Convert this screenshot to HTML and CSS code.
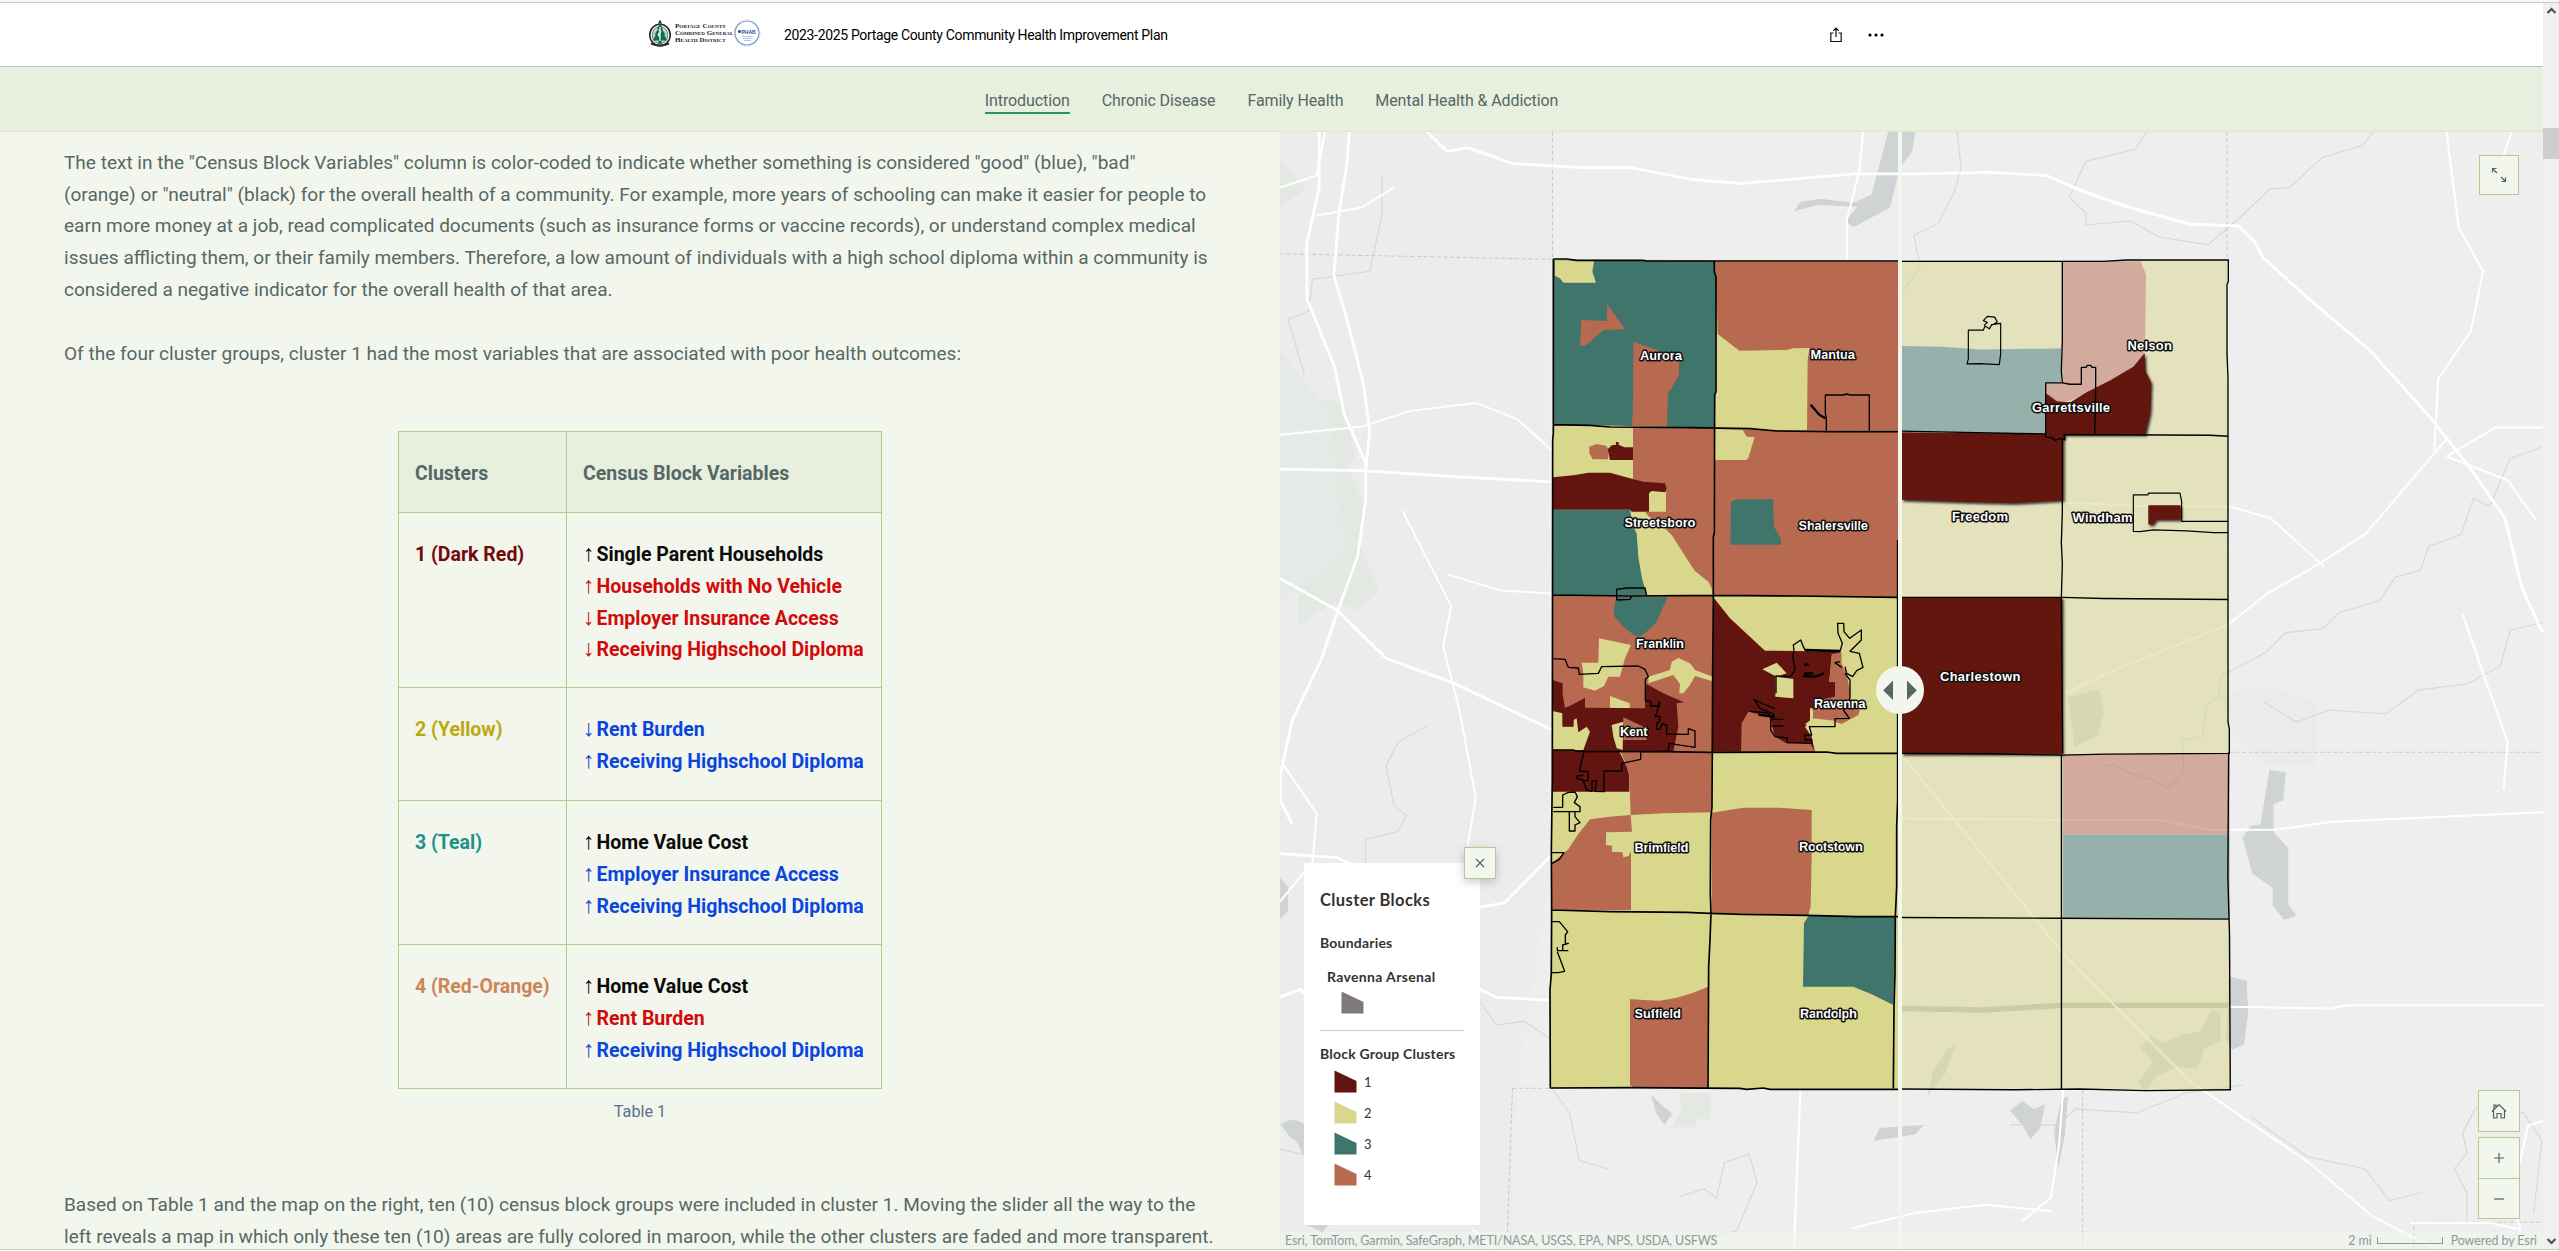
FILE: index.html
```html
<!DOCTYPE html>
<html lang="en">
<head>
<meta charset="utf-8">
<title>2023-2025 Portage County Community Health Improvement Plan</title>
<link rel="stylesheet" href="styles.css">
</head>
<body>
<div class="top-edge"></div>
<div class="window">
<div class="page">
  <header class="header">
    <div class="brand">
      <svg class="tree" width="24" height="28" viewBox="0 0 24 28"><path d="M12 .5l2 4h-4z" fill="#26302c"/><ellipse cx="12" cy="16" rx="10.2" ry="10.8" fill="#fff" stroke="#26302c" stroke-width="1.6"/><ellipse cx="12" cy="16" rx="7.8" ry="8.6" fill="#c5d3cb" stroke="#555" stroke-width=".7"/><path d="M12 5l3 5-1 .3 3.4 5-1.3.3 3.2 5.9H4.700l3.200-5.900-1.300-.3 3.400-5L9 10zM10.500 21h3v4h-3z" fill="#08704b"/><path d="M12 8v14M10.500 11q4 1.500 1 3t1 4" fill="none" stroke="#fff" stroke-width="1.200"/><path d="M3 24.500q9 4 18 0" fill="none" stroke="#26302c" stroke-width="2"/></svg>
      <div class="brand-text"><span>Portage County</span><span>Combined General</span><span>Health District</span></div>
      <svg class="seal" width="28" height="28" viewBox="0 0 28 28"><circle cx="14" cy="14" r="13.300" fill="none" stroke="#bcc5d8" stroke-width=".7" stroke-dasharray="1 1.500"/><circle cx="14" cy="14" r="12" fill="#fff" stroke="#7b97d0" stroke-width="1.200"/><circle cx="6.500" cy="12.500" r="1.600" fill="#29529b"/><text x="8.500" y="14.500" font-family="Liberation Sans" font-weight="700" font-size="5" fill="#29529b">PHAB</text><path d="M9 17.500h11M9.500 19.500h10M11 21.500h7" stroke="#9bb0d8" stroke-width=".8"/></svg>
    </div>
    <h1 class="title">2023-2025 Portage County Community Health Improvement Plan</h1>
    <div class="actions">
      <svg width="12" height="16" viewBox="0 0 12 16"><path d="M3.500 6H.8v8.500h10.400V6H8.500M6 10V1.200M3.300 3.800L6 1.100l2.700 2.700" fill="none" stroke="#111" stroke-width="1.200"/></svg>
      <svg width="16" height="4" viewBox="0 0 16 4"><circle cx="2" cy="2" r="1.600"/><circle cx="8" cy="2" r="1.600"/><circle cx="14" cy="2" r="1.600"/></svg>
    </div>
  </header>
  <nav class="nav">
    <a class="active">Introduction</a><a>Chronic Disease</a><a>Family Health</a><a>Mental Health &amp; Addiction</a>
  </nav>
  <main class="main">
    <article class="story">
      <p>The text in the "Census Block Variables" column is color-coded to indicate whether something is considered "good" (blue), "bad"<br>(orange) or "neutral" (black) for the overall health of a community. For example, more years of schooling can make it easier for people to<br>earn more money at a job, read complicated documents (such as insurance forms or vaccine records), or understand complex medical<br>issues afflicting them, or their family members. Therefore, a low amount of individuals with a high school diploma within a community is<br>considered a negative indicator for the overall health of that area.</p>
      <p>Of the four cluster groups, cluster 1 had the most variables that are associated with poor health outcomes:</p>
      <table class="clusters">
        <tr class="r81"><th>Clusters</th><th>Census Block Variables</th></tr>
        <tr class="r175"><td class="maroon">1 (Dark Red)</td><td><div class="neutral"><i>↑</i>Single Parent Households</div><div class="bad"><i>↑</i>Households with No Vehicle</div><div class="bad"><i>↓</i>Employer Insurance Access</div><div class="bad"><i>↓</i>Receiving Highschool Diploma</div></td></tr>
        <tr class="r113"><td class="yellow">2 (Yellow)</td><td><div class="good"><i>↓</i>Rent Burden</div><div class="good"><i>↑</i>Receiving Highschool Diploma</div></td></tr>
        <tr class="r144"><td class="teal">3 (Teal)</td><td><div class="neutral"><i>↑</i>Home Value Cost</div><div class="good"><i>↑</i>Employer Insurance Access</div><div class="good"><i>↑</i>Receiving Highschool Diploma</div></td></tr>
        <tr class="r144"><td class="orange">4 (Red-Orange)</td><td><div class="neutral"><i>↑</i>Home Value Cost</div><div class="bad"><i>↑</i>Rent Burden</div><div class="good"><i>↑</i>Receiving Highschool Diploma</div></td></tr>
      </table>
      <div class="caption">Table 1</div>
      <p>Based on Table 1 and the map on the right, ten (10) census block groups were included in cluster 1. Moving the slider all the way to the<br>left reveals a map in which only these ten (10) areas are fully colored in maroon, while the other clusters are faded and more transparent.</p>
    </article>
    <section class="map">
      <svg class="canvas" width="1263" height="1117" viewBox="1280 132 1263 1117">
        <defs>
          <filter id="sh" x="-10%" y="-10%" width="130%" height="130%"><feDropShadow dx="1.500" dy="2" stdDeviation="1.300" flood-color="#222" flood-opacity=".85"/></filter>
          <clipPath id="lc"><rect x="1280" y="132" width="618" height="1118"/></clipPath>
        </defs>
        <rect x="1280" y="132" width="1263" height="1118" fill="#eee"/>
        <!-- basemap -->
        <g transform="translate(1280 0) scale(.8157 .7978)">
          <path d="M0 160H330V1100L290 1370V1570H0z" fill="#ececec"/>
          <path d="M0 200l32 38-32 20zM32 503l30-3 20 10 10 65-10 10 25 55-10 45 25 55-25 25-30-10-45 28z" fill="#e3e8e3"/>
          <path d="M0 440l60 75 20 180-80 60z" fill="#e6eae6"/>
          <path d="M490 1370h38v33h-18v10h-30l12-22z" fill="#e3e8e3"/>
          <path d="M1150 870l60-10 60 20v80h-60l-40-40z" fill="#ebebeb"/>
          <g fill="#cfd3d4">
            <path d="M747 160h33l-5 30-15 20-12 50-45 25-10-8 15-18-50-2-28 8 8-12 25-4 40 5 22-10 8-30z"/>
            <path d="M1213 965l20 3-3 35-12 5v35l18 20v70l10 15-15 5-14-18v-22l-25-18-12-45 10-15 12-2zM1163 1224l22 5 2 40-5 40-15 7-7-15z"/>
            <path d="M895 1392l15-12 14 10 14-6-6 30-12 14-10-18zM958 1378l8-4-4 50-8 40-5-45zM735 1414l55-4-12 12-50 8zM0 1408l25 8 8 18-20-8zM455 1372l12 12 14 12-10 14-10-15z"/>
            <path d="M0 1100l10 12v30l-10 10zM1 1410q15-12 30 0l-2 40-8-18zM32 1535h28l-8 10z"/>
            <path d="M828 1310l-12 35-22 28 6-28 18-30zM1068 1298l14 9 24-10 22-4 15-28 10 5v35l-20 9-8 26-25-3-25 12-15 20-8-12 18-26-16-18zM966 874l38-10 6 28-8 30-28 14z" opacity=".8"/>
          </g>
          <g fill="none" stroke="#d5d8d8" stroke-width="1.400">
            <path d="M1340 165l-12 17-50 15-40 38-25 2-30 30-45 40-60-10-35-20-55 5v-15l-20-20 20-45 60-15 15-22M830 165l5 45-8 30-20 40-30 15 8 40-25 35-40 5M125 220v50l-15 70-70 10-5 40-25 10 20 70M1548 560l-40 15-25 60-20-10-15 45-40 15-10 30-30 8-20 30-50 15-20 20-45 5-25 25-55 30-2 25-15 10-5 40-25 5 2 40-20 20-18-10-30-10-20-10-18 6M1548 780l-40 10-12 45-40 22-60 8-40 30-70-5-40 15-40-25M180 910l-35 20-15 30 10 50 15 12-10 20-40 10v45M1180 1360l-70 10-60 25-75-5-20 20-60 0M1190 1400l70 50 70 15 30 40 40-10M0 1440l40 10 30-15M245 1255l20 30 35-5 35 25M330 1360l25 35 12 60 35 10M490 1500l30-10 15 12 10-45 30-10 10 35-25 60-30 10"/>
            <path d="M1455 1535v-40l-15-30 15-20-5-25 15-30 15-5 45 10 22 35-10 90"/>
          </g>
          <path d="M762 1264l100 2 98-6 203 0" fill="none" stroke="#bfc1ba" stroke-width="7"/>
          <g fill="none" stroke="#c7c9c9" stroke-width="1.300" stroke-dasharray="5 3"><path d="M334 165v160M1161 165v160M0 318l334 7M1163 943h385M984 1366v200M285 1364h47M285 1364l-7 204M1390 1566v-34h158"/></g>
          <g fill="none" stroke="#fff" stroke-width="2.500" stroke-linejoin="round">
            <path d="M180 165l25 25 25-5 55 20 85 5 60 0 75 15 60 5 140-12h80l85-2 70 4 40 18 55 20 80 23 60 2 20 20 10 20 60 55 70 60 75 85 50 65 42 62 20 85 22 50 35 50 80 90 70 70" stroke-width="3.500"/>
            <path d="M85 165l-3 40-10 65-6 75 16 55 20 80 8 60-5 48 0 40-10 70-25 70-20 60-35 75-15 70v30l15 30M48 165v70l-15 70v70l34 85 12 60 28 65" stroke-width="3.500"/>
            <path d="M0 588l100 2 125 8 108 6M0 1070l70 5 20 10 60 75M215 1142l60-10 58-60M0 1250l25-10 4 5M245 1240l20 10 68 4M0 725l70 40 60 60 80 30 124 60" stroke-width="3.500"/>
            <path d="M0 545l100-10 60-20 80-10 50 20 44 40M45 270l55-10 40-25M205 720l65 20 64 4M0 1130l40-50 5-60-40-60M150 640l60 120-10 50 20 80 20 110-10 60M55 165l-10 55-45 15M715 165l-5 50-15 60v50"/>
            <path d="M760 1026l260 2 60 0 60 12 80 0 70-10 258-12M1163 1262l125 2 20-4 240 0M765 950l195 245 155 160 150 105 75 65 85 45" stroke-width="2.500"/>
            <path d="M960 630l110 5 95 0 50 15 65 60M1163 690l0-5M962 870l60-30 140-57 50-40 60-35 60-40 100-120M1430 165l15 120 30 55-15 75-40 60-5 90M1510 165l-20 60"/>
            <path d="M1430 572l60-36 58 0M1430 572l75 30 35 50M1450 770l20 60 35 100-5 60M638 1366l-8 200M960 1366l-5 70-10 65-35 30M700 1540l80-20 85-10 80 8M235 1540l30 28M1520 1566v-30l-12-25 22-100 18-6M1385 1533h100l35 8"/>
          </g>
        </g>
        <!-- fully coloured layer, left of the swipe handle -->
        <g clip-path="url(#lc)"><g transform="translate(1530 240) scale(.33333)">
          <path d="M70 58L1120 62V2546H60L68 600z" fill="#d9d78c"/>
          <path fill="#40756c" d="M70 62H553L558 110 556 460 553 562H480L190 556H70z"/>
          <path fill="#d9d78c" d="M75 62L192 64 187 95 198 128H100L90 115 75 108z"/>
          <path fill="#b86a51" d="M154 240L230 243 232 193 285 268 222 270 195 292 165 318 150 316zM310 305L380 330 447 365V405L425 445 414 460 411 558H306L309 490zM553 65H1120V572H831L833 360 838 324 790 325 770 330 628 332 563 282 558 110z"/>
          <path fill="#b86a51" d="M309 560L553 565 548 1068 545 1045 535 1025 494 992 460 940 425 885 400 860 357 830 345 815H408V755L309 717zM178 620L200 612 228 617 235 628V658H188L178 640zM553 567L1120 575V1070L550 1068z"/>
          <path fill="#621510" d="M68 712L130 706 175 698H240L300 715 340 725 405 730 410 748 405 757 365 753 357 760V815H305L300 809H68zM233 628L245 616 258 614V606H266V614L283 622H309V660H240z"/>
          <path fill="#40756c" d="M68 810H300L310 860 320 880 325 950 335 1010 350 1066H68zM603 785L622 778H729L732 860 752 895 753 914H601z"/>
          <path fill="#d9d78c" d="M555 567L638 570 650 590 674 592 665 620 655 655 648 660H555z"/>
          <g transform="translate(0 1020)">
            <path fill="#b86a51" d="M68 48H548V515H68z"/>
            <path fill="#40756c" d="M258 50L413 52 395 90 380 125 350 155 325 172 305 160 280 140 252 108V90z"/>
            <path fill="#d9d78c" d="M207 175L303 195 285 235 270 290H235L222 318 195 332 160 322V280L155 248H205zM355 290L420 270 425 245 445 234 480 250 495 270 548 290 545 303 495 288 480 315 460 340H448L450 312 430 285 355 310zM240 348L299 370V385L240 383z"/>
            <path fill="#d9d78c" d="M68 390H300V515H68z"/>
            <path fill="#621510" d="M68 300L98 310V345L105 383 125 375 165 353V383L345 385V310L400 340 462 367 440 370 445 440 430 515H268L298 575V635H68V510H160L180 455 170 440 145 457 140 415 131 420V440H97V400L68 393z"/>
            <path fill="#d9d78c" d="M245 435L280 425 278 510 260 505 250 470z"/>
            <path fill="#b86a51" d="M280 412L350 445V480H280zM272 516L545 517V697L400 700 302 705 298 590 290 560zM302 705L306 755 228 757V795L246 797V815L278 817 280 832 296 828 303 815V990H65V850L115 808 145 762 180 718 240 710zM546 698L640 683H750L845 690V830L842 980 835 1005 546 998z"/>
            <path fill="#621510" d="M550 52L600 115 705 212 935 215 905 230 898 305H915V350L865 385 840 395 848 420 825 440 845 470 855 515H548z"/>
            <path fill="#b86a51" d="M655 395L720 410 735 470 770 490H840L855 515H633L635 430zM905 222L935 218V250L950 285 960 330V385L990 390 985 405 935 432 915 425H848L850 385H865V400L868 360 915 350V305H898z"/>
            <path fill="#d9d78c" d="M736 290L790 297V355L736 350zM697 268L740 248 770 280 740 290zM935 228L990 215 1000 260 965 290 940 255zM825 433L848 415 915 422V440H845zM840 385h8v40h-8z"/>
          </g>
          <g transform="translate(0 1740)"><path fill="#40756c" d="M835 288H1097L1090 555 1030 525 970 500H819L822 310z"/><path fill="#b86a51" d="M300 537L340 540 390 542 440 533 490 518 534 500 532 805 312 803 300 795z"/></g>
          <g fill="none" stroke="#000" stroke-width="5" stroke-linejoin="round">
            <path d="M70 57L110 57 140 61H340L350 63H1110M70 57V580L68 600 67 1620 64 1830 65 2010 64 2200 60 2250 61 2545M553 65V95L558 110V455L554 465 553 880 550 890V1068L548 1300 546 1700 542 1740 541 1960 543 2020 540 2100 536 2180 534 2545M70 554L180 556 240 561 480 563 660 566 740 573 895 575 1110 575M68 1065L300 1068 550 1066 800 1068 1104 1072M68 1530H130L140 1534 390 1535 545 1537 890 1536 920 1540H1104M65 2010L240 2015 470 2017 540 2020 640 2023 830 2026 980 2030H1104M61 2544L310 2543 630 2545 650 2548 700 2544 720 2548H1110M1103 900V1680L1100 1760V1940L1096 2030 1095 2200 1092 2300 1090 2545"/>
            <path stroke-width="4" d="M889 572V535L886 520V465H940L950 462 960 465H1018V572M260 1080V1048L290 1044H345L350 1066M260 1080L300 1078 305 1068"/>
            <path stroke-width="7" d="M842 494L868 524 886 535"/>
            <g transform="translate(0 1020)" stroke-width="4">
              <path d="M70 236L105 238 115 262 145 264 148 283 205 280 215 260 325 258 345 268 355 290 346 298V362L362 364V378H388V364L380 400 375 408 390 410 388 425 380 430V448H390L395 432 410 435V462L475 463V446L495 453V502L416 490V513L390 515H332V538L275 550V573H222V635L195 634 200 602 186 604V634L170 630 160 604 175 600V575L148 573 162 516M160 600L140 596V588L160 586M70 682H98V645L115 637 135 636 142 650 133 668 150 680 150 695H70M118 695V753H135V735L150 728 135 710V695M66 818H102L88 838 66 850"/>
              <path d="M792 212L790 195 812 180 820 200 826 212 930 214 937 190 924 160 923 130 941 130 942 155 959 175 994 150V180L960 214 988 220 999 262 980 272 968 290 950 280 945 260M930 245L915 248 935 262M945 280L960 300V350L958 370 940 390 958 415 915 416V440H838L845 465 825 465V480H845V490L772 488V474L735 470 722 450V415L732 402 690 385 672 358 700 372 735 386M660 394L710 398 720 405M738 340V288L782 290 795 270 788 230 792 212M725 418H760M725 438H760"/>
              <path stroke-width="7" d="M685 404L735 411M822 280H850M820 288L855 290 882 280M826 210L930 213M822 254H836"/>
            </g>
            <g transform="translate(0 1740)" stroke-width="4"><path d="M66 305L88 305 113 335 106 345V370H115L98 375V392H82V382M115 392H98M82 395L104 454 85 458H66"/></g>
          </g>
        </g></g>
        <!-- faded layer, right of the swipe handle -->
        <g opacity=".5">
          <path fill="#d9d78c" transform="translate(1280 0) scale(.8157 .7978)" d="M762 326H1162L1163 750 1166 1366 762 1364z"/>
          <g transform="translate(1870 240) scale(.33333 .34435)"><path fill="#b86a51" d="M577 62H812L828 100 825 320 822 330 790 370 720 410 650 445 580 475 545 462 527 445 524 413H577z"/><path fill="#40756c" d="M96 308L215 310 330 318 573 315V413H524L527 562 96 557z"/></g>
          <g transform="translate(1280 0) scale(.8157 .7978)"><path fill="#b86a51" d="M960 945H1164V1046H960z"/><path fill="#40756c" d="M960 1046H1164V1152H960z"/></g>
        </g>
        <g fill="#621510" filter="url(#sh)"><g transform="translate(1870 240) scale(.33333 .34435)">
          <path d="M527 445L560 468 600 472 650 442 720 408 790 368 824 328 826 380 844 415 841 500 826 565H585L580 580 555 582 527 572z"/><path d="M96 558L527 563 580 575V756L430 764 300 761 96 754z"/><path d="M835 770H932V812H860L848 826H835z"/><path d="M96 1038H577V1492H96z"/>
        </g></g>
        <g transform="translate(1870 240) scale(.33333 .34435)" fill="none" stroke="#000" stroke-width="4" stroke-linejoin="round">
          <path d="M96 62H577L700 62 770 58H1075V120L1071 130V330L1074 400V1400L1078 1420V1493M577 62V290L574 380 577 413M96 555L245 558 440 562 527 563M527 563V415L577 415 600 419H634V370H648L652 364 662 364 666 370H677V435L674 565M527 563V572L545 574 555 582 572 576 585 580 582 565 1020 567 1075 570M577 575V790L574 880 577 940 574 1038 578 1490M96 1038H577L700 1041 1075 1044M96 1491L350 1492 580 1496 705 1493 1078 1491"/>
          <path d="M295 262H340L345 250 358 258 365 246 392 242V330L388 362 330 359 291 360 295 345zM342 248L352 240 340 234 352 222 374 224 382 238 362 250M835 740H790V846L810 847 850 842 950 845 1030 850H1075M835 740V735H930L935 760V817H1075" stroke-width="3.500"/>
        </g>
        <g transform="translate(1280 0) scale(.8157 .7978)" fill="none" stroke="#000" stroke-width="1.700"><path d="M958 945V1366M762 1150L955 1151 1164 1152M1163 943L1162 1100 1164 1170 1165 1366M762 1365L900 1366 980 1365 1060 1367 1166 1366"/></g>
        <g class="places">
          <text x="1640" y="360.300" textLength="42">Aurora</text><text x="1810.500" y="359" textLength="44.500">Mantua</text><text x="1624.500" y="527" textLength="71">Streetsboro</text><text x="1798.500" y="530.300" textLength="69.500">Shalersville</text><text x="1636" y="648.300" textLength="48">Franklin</text><text x="1620" y="736" textLength="27.500">Kent</text><text x="1814" y="707.600" textLength="51.500">Ravenna</text><text x="1634.500" y="852.300" textLength="54">Brimfield</text><text x="1799" y="851" textLength="64">Rootstown</text><text x="1634.500" y="1017.700" textLength="46.500">Suffield</text><text x="1800" y="1017.700" textLength="57">Randolph</text><text x="2127.500" y="349.500" textLength="44.500">Nelson</text><text x="2032" y="412" textLength="78">Garrettsville</text><text x="1952" y="521" textLength="56">Freedom</text><text x="2072.500" y="522.300" textLength="60">Windham</text><text x="1940" y="681" textLength="80.500">Charlestown</text>
        </g>
        <path d="M1898 132h4v1118h-4z" fill="#f3f6ed"/><circle cx="1900" cy="690" r="24" fill="#f3f6ed"/><path d="M1893 680.500v19.500l-9.800-9.700zM1907 680.500v19.500l9.800-9.700z" fill="#566866"/>
      </svg>
      <div class="attribution"><span>Esri, TomTom, Garmin, SafeGraph, METI/NASA, USGS, EPA, NPS, USDA, USFWS</span><span class="mi">2 mi</span><span class="scale"></span><span>Powered by Esri</span></div>
      <aside class="legend">
        <h2>Cluster Blocks</h2>
        <h3>Boundaries</h3>
        <h4>Ravenna Arsenal</h4>
        <svg class="gray" width="23" height="23" viewBox="0 0 23 23"><path d="M.5.5L22.500 11V22.500H.5z" fill="#7f7a7a"/></svg>
        <hr>
        <h3 class="groups">Block Group Clusters</h3>
        <ul>
          <li><svg width="23" height="23" viewBox="0 0 23 23"><path d="M.5.5L22.500 11V22.500H.5z" fill="#621510"/></svg>1</li>
          <li><svg width="23" height="23" viewBox="0 0 23 23"><path d="M.5.5L22.500 11V22.500H.5z" fill="#d9d78c"/></svg>2</li>
          <li><svg width="23" height="23" viewBox="0 0 23 23"><path d="M.5.5L22.500 11V22.500H.5z" fill="#40756c"/></svg>3</li>
          <li><svg width="23" height="23" viewBox="0 0 23 23"><path d="M.5.5L22.500 11V22.500H.5z" fill="#b86a51"/></svg>4</li>
        </ul>
      </aside>
      <button class="btn close"><svg width="10" height="10" viewBox="0 0 10 10"><path d="M1 1l8 8M9 1L1 9"/></svg></button>
      <button class="btn expand"><svg width="16" height="16" viewBox="0 0 16 16"><path d="M1.500 5.500v-4h4M2 2l4 4M14.500 10.500v4h-4M14 14l-4-4"/></svg></button>
      <div class="tools">
        <button class="btn"><svg width="16" height="16" viewBox="0 0 16 16"><path d="M1 8.500L8 1.500l7 7M2.500 7.500v7.500H6v-4.500h4V15h3.500V7.500M3 6V2h2v2"/></svg></button>
        <div class="zoom"><button class="btn"><svg width="10" height="10" viewBox="0 0 10 10"><path d="M0 5h10M5 0v10"/></svg></button><button class="btn"><svg width="10" height="10" viewBox="0 0 10 10"><path d="M0 5h10"/></svg></button></div>
      </div>
    </section>
  </main>
</div>
<div class="scrollbar"><svg width="16" height="16" viewBox="0 0 16 16"><path d="M4.500 10L8.500 6l4 4"/></svg><div class="thumb"></div><svg class="down" width="16" height="16" viewBox="0 0 16 16"><path d="M4.500 6l4 4 4-4"/></svg></div>
</div>
</body>
</html>
```
FILE: styles.css
```css
* { box-sizing: border-box; }
body { margin: 0; width: 2559px; height: 1251px; overflow: hidden; background: #fff; font-family: Roboto, "Liberation Sans", sans-serif; color: #566866; }
.top-edge { height: 3px; background: #f8f8f8; border-bottom: 1px solid #cacaca; }
.window { display: flex; height: 1247px; border-bottom: 1px solid #c5cacc; }
.page { width: 2543px; display: flex; flex-direction: column; }
.header { height: 64px; flex: none; display: flex; align-items: center; background: #fff; border-bottom: 1px solid #bcbfc2; padding: 0 659px 0 648px; }
.brand { display: flex; align-items: center; width: 136px; margin-top: -3px; }
.brand-text { display: flex; flex-direction: column; width: 58px; margin-left: 3px; font: 700 7px/7px "Liberation Serif", serif; font-variant: small-caps; color: #222; white-space: nowrap; letter-spacing: .05px; }
.seal { flex: none; }
.title { margin: 0; font-size: 14px; font-weight: 400; letter-spacing: -.34px; color: #000; white-space: nowrap; }
.actions { margin-left: auto; display: flex; align-items: center; gap: 26px; }
.nav { height: 65px; flex: none; display: flex; justify-content: center; align-items: center; gap: 32px; background: #e8efde; border-bottom: 1px solid #dfe6d2; font-size: 16px; letter-spacing: -.1px; }
.nav a { height: 24px; line-height: 22px; margin-top: 5px; white-space: nowrap; }
.nav .active { border-bottom: 2px solid #219a5a; }
.main { flex: 1; display: flex; min-height: 0; }
.story { width: 1280px; background: #f3f6ed; padding: 15px 64px 0; overflow: hidden; font-size: 19.050px; line-height: 31.670px; white-space: nowrap; }
.story p { margin: 0 0 32.300px; }
.clusters { border-collapse: collapse; margin: 62px auto 0; width: 484px; table-layout: fixed; font-weight: 700; font-size: 19.500px; }
.clusters th, .clusters td { border: 1px solid #b2cc90; padding: 26px 0 0 16px; text-align: left; vertical-align: top; }
.clusters th { background: #e8efde; }
.clusters th:first-child { width: 168px; }
.r81 { height: 81px; } .r175 { height: 175px; } .r113 { height: 113px; } .r144 { height: 144px; }
.clusters div { height: 31.670px; }
.clusters i { display: inline-block; width: 13.500px; font: 400 23px/20px "Liberation Serif", serif; }
.neutral { color: #0b0b0b; } .bad { color: #d20a0a; } .good { color: #0a45dd; }
.maroon { color: #730a0a; } .yellow { color: #bba90f; } .teal { color: #20918a; } .orange { color: #cd8558; }
.caption { margin: 12px 0 67px; text-align: center; font-size: 16.200px; line-height: 21px; color: #5a6f8d; }
.map { width: 1263px; position: relative; overflow: hidden; font-family: Lato, sans-serif; }
.canvas { display: block; }
.places text { font: 700 13px "Liberation Sans", sans-serif; fill: #fff; stroke: #111; stroke-width: 3px; paint-order: stroke; stroke-linejoin: round; }
.attribution { position: absolute; left: 0; right: 0; bottom: 0; height: 17px; display: flex; align-items: center; padding: 0 6px 0 5px; background: rgba(243,246,237,.55); font-size: 12.500px; letter-spacing: -.1px; color: #8b9a98; white-space: nowrap; }
.mi { margin-left: auto; }
.scale { width: 66px; height: 7px; margin: 0 8px 0 5px; border: 1px solid #8b9a98; border-top: 0; }
.legend { position: absolute; left: 24px; top: 731px; width: 176px; height: 362px; background: #fff; padding: 0 16px; color: #323232; white-space: nowrap; }
.legend h2 { margin: 27px 0 0; font-size: 16.500px; letter-spacing: .4px; line-height: 20px; }
.legend h3 { margin: 24px 0 0; font-size: 14px; line-height: 18px; letter-spacing: .2px; }
.legend h4 { margin: 16px 0 0 7px; font-size: 14px; line-height: 18px; letter-spacing: .35px; }
.legend .gray { display: block; margin: 5px 0 0 21px; }
.legend hr { margin: 16px 0 0; border: 0; border-top: 1px solid #ccc; }
.legend .groups { margin-top: 14px; }
.legend ul { list-style: none; margin: 7px 0 0 14px; padding: 0; }
.legend li { display: flex; align-items: center; gap: 7px; height: 23px; margin-bottom: 8px; font-size: 13px; }
.btn { display: flex; align-items: center; justify-content: center; width: 42px; height: 42px; padding: 0; background: #f3f6ed; border: 1px solid #b2cc90; }
.btn svg { fill: none; stroke: #4f6462; stroke-width: 1.200; }
.close { position: absolute; left: 184px; top: 715px; width: 32px; height: 32px; box-shadow: 0 3px 10px rgba(0,0,0,.2); }
.expand { position: absolute; right: 24px; top: 23px; width: 40px; height: 40px; }
.tools { position: absolute; right: 23px; bottom: 30px; display: flex; flex-direction: column; gap: 5px; }
.zoom .btn + .btn { border-top: 0; height: 40px; }
.scrollbar { width: 16px; height: 1246px; background: #f0f0f0; display: flex; flex-direction: column; }
.scrollbar svg { fill: none; stroke: #505050; stroke-width: 2.200; }
.thumb { height: 31px; margin-top: 109px; background: #cdcdcd; }
.down { margin-top: auto; }
```
